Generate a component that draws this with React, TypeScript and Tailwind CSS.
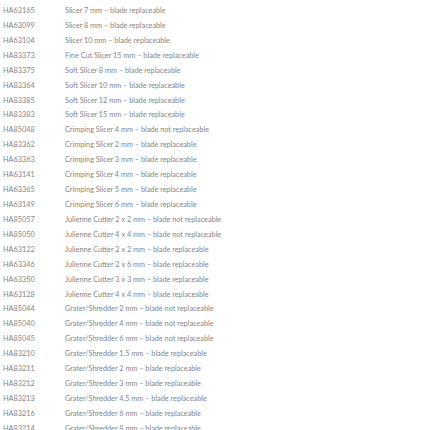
import React from 'react';

const rows: [string, string][] = [
  ['HA63165', 'Slicer 7 mm – blade replaceable'],
  ['HA63099', 'Slicer 8 mm – blade replaceable'],
  ['HA63104', 'Slicer 10 mm – blade replaceable'],
  ['HA83373', 'Fine Cut Slicer 15 mm – blade replaceable'],
  ['HA83375', 'Soft Slicer 8 mm – blade replaceable'],
  ['HA83364', 'Soft Slicer 10 mm – blade replaceable'],
  ['HA83385', 'Soft Slicer 12 mm – blade replaceable'],
  ['HA83383', 'Soft Slicer 15 mm – blade replaceable'],
  ['HA85048', 'Crimping Slicer 4 mm – blade not replaceable'],
  ['HA83362', 'Crimping Slicer 2 mm – blade replaceable'],
  ['HA63363', 'Crimping Slicer 3 mm – blade replaceable'],
  ['HA63141', 'Crimping Slicer 4 mm – blade replaceable'],
  ['HA63365', 'Crimping Slicer 5 mm – blade replaceable'],
  ['HA63149', 'Crimping Slicer 6 mm – blade replaceable'],
  ['HA85057', 'Julienne Cutter 2 x 2 mm – blade not replaceable'],
  ['HA85050', 'Julienne Cutter 4 x 4 mm – blade not replaceable'],
  ['HA63122', 'Julienne Cutter 2 x 2 mm – blade replaceable'],
  ['HA63346', 'Julienne Cutter 2 x 6 mm – blade replaceable'],
  ['HA63350', 'Julienne Cutter 3 x 3 mm – blade replaceable'],
  ['HA63128', 'Julienne Cutter 4 x 4 mm – blade replaceable'],
  ['HA85044', 'Grater/Shredder 2 mm – blade not replaceable'],
  ['HA85040', 'Grater/Shredder 4 mm – blade not replaceable'],
  ['HA85045', 'Grater/Shredder 6 mm – blade not replaceable'],
  ['HA83210', 'Grater/Shredder 1.5 mm – blade replaceable'],
  ['HA83211', 'Grater/Shredder 2 mm – blade replaceable'],
  ['HA83212', 'Grater/Shredder 3 mm – blade replaceable'],
  ['HA83213', 'Grater/Shredder 4.5 mm – blade replaceable'],
  ['HA83216', 'Grater/Shredder 6 mm – blade replaceable'],
  ['HA83214', 'Grater/Shredder 8 mm – blade replaceable'],
];

export default function App() {
  return (
    <div className="w-[430px] h-[430px] overflow-hidden bg-white pt-[4px] font-['Lato',sans-serif] text-[7.3px] text-[#858585]">
      {rows.map(([code, name]) => (
        <div key={code + name} className="flex h-[14.93px] items-center">
          <div className="w-[65px] pl-[3px] shrink-0">{code}</div>
          <div>{name}</div>
        </div>
      ))}
    </div>
  );
}
